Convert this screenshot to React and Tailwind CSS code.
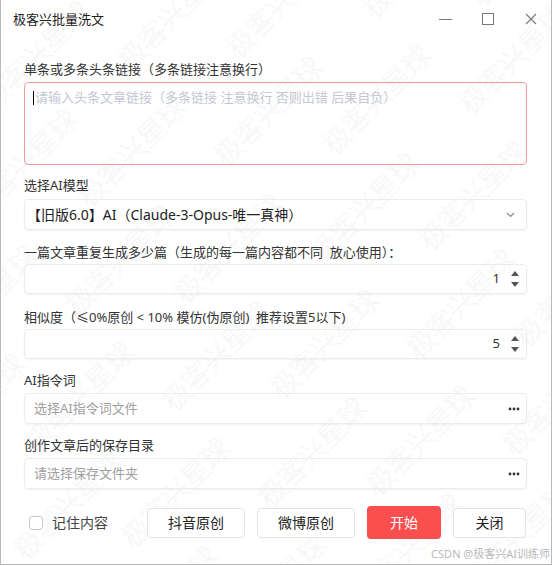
import { useState } from "react";

const font = "font-['Noto_Sans','Noto_Sans_CJK_SC',sans-serif]";

function Label({ children, className }) {
    return (
        <div className={`h-[20px] leading-[20px] text-[13px] text-[#333] whitespace-pre ${className}`}>
            {children}
        </div>
    );
}

function Spinner() {
    return (
        <div className="flex flex-col items-center gap-[6px] w-[10px] mr-[6px]">
            <svg width="8" height="5" viewBox="0 0 8 5">
                <path d="M4 0 L8 5 L0 5 Z" fill="#555" />
            </svg>
            <svg width="8" height="5" viewBox="0 0 8 5">
                <path d="M0 0 L8 0 L4 5 Z" fill="#555" />
            </svg>
        </div>
    );
}

function Dots() {
    return (
        <svg width="12" height="4" viewBox="0 0 12 4" className="mr-[3px]">
            <circle cx="2" cy="2" r="1.4" fill="#333" />
            <circle cx="6" cy="2" r="1.4" fill="#333" />
            <circle cx="10" cy="2" r="1.4" fill="#333" />
        </svg>
    );
}

function Watermark() {
    const rows = Array.from({ length: 14 });
    const cols = Array.from({ length: 9 });
    return (
        <div className="pointer-events-none absolute inset-0 overflow-hidden">
            <div className="absolute left-[-300px] top-[-300px] w-[1200px] h-[1200px] rotate-[-45deg] flex flex-col gap-[38px] pt-[20px]">
                {rows.map((_, r) => (
                    <div
                        key={r}
                        className={`flex gap-[70px] whitespace-nowrap ${r % 2 ? "pl-[95px]" : "pl-[10px]"}`}
                    >
                        {cols.map((_, c) => (
                            <span
                                key={c}
                                className="text-[28px] leading-[30px] font-light text-transparent [-webkit-text-stroke:0.3px_#ececec]"
                            >
                                极客兴星球
                            </span>
                        ))}
                    </div>
                ))}
            </div>
        </div>
    );
}

export default function App() {
    const [remember, setRemember] = useState(false);

    return (
        <div className={`relative w-[553px] h-[566px] bg-white ${font} overflow-hidden`}>
            <div className="relative w-[552px] h-[565px] border border-[#b9b9b9] border-t-0">
                <Watermark />

                {/* title bar */}
                <div className="relative flex items-center h-[38px] pl-[12px]">
                    <span className="text-[13px] text-[#222] leading-none">极客兴批量洗文</span>
                    <div className="ml-auto flex items-center h-full">
                        <div className="w-[13px] h-px bg-[#777] mr-[30px]" />
                        <div className="w-[12px] h-[12px] border border-[#777] mr-[31px]" />
                        <svg width="12" height="12" viewBox="0 0 12 12" className="mr-[14px]">
                            <path d="M1 1 L11 11 M11 1 L1 11" stroke="#777" strokeWidth="1.1" />
                        </svg>
                    </div>
                </div>

                <div className="relative pl-[23px] pr-[24px]">
                    <Label className="mt-[21px]">单条或多条头条链接（多条链接注意换行）</Label>
                    <div className="mt-[3px] h-[83px] rounded-[4px] border border-[#f29b9b] px-[8px] pt-[5px]">
                        <div className="flex items-center h-[20px] text-[13px]">
                            <span className="w-px h-[14px] bg-black mr-[1px]" />
                            <span className="text-[#c4c8d2]">请输入头条文章链接（多条链接 注意换行 否则出错 后果自负）</span>
                        </div>
                    </div>

                    <Label className="mt-[10px]">选择AI模型</Label>
                    <div className="mt-[4px] h-[31px] rounded-[4px] border border-[#ececec] shadow-[0_1px_2px_rgba(0,0,0,0.05)] flex items-center pl-[2px] pr-[11px]">
                        <span className="text-[14px] text-[#222]">【旧版6.0】AI（Claude-3-Opus-唯一真神）</span>
                        <svg width="9" height="6" viewBox="0 0 9 6" className="ml-auto">
                            <path d="M1 1 L4.5 4.5 L8 1" fill="none" stroke="#888" strokeWidth="1.2" />
                        </svg>
                    </div>

                    <Label className="mt-[12px]">{"一篇文章重复生成多少篇（生成的每一篇内容都不同  放心使用）："}</Label>
                    <div className="mt-[2px] h-[30px] rounded-[4px] border border-[#ececec] shadow-[0_1px_2px_rgba(0,0,0,0.05)] flex items-center justify-end">
                        <span className="text-[13px] text-[#333] mr-[10px]">1</span>
                        <Spinner />
                    </div>

                    <Label className="mt-[13px]">{"相似度（≤0%原创 < 10% 模仿(伪原创)  推荐设置5以下)"}</Label>
                    <div className="mt-[2px] h-[30px] rounded-[4px] border border-[#ececec] shadow-[0_1px_2px_rgba(0,0,0,0.05)] flex items-center justify-end">
                        <span className="text-[13px] text-[#333] mr-[10px]">5</span>
                        <Spinner />
                    </div>

                    <Label className="mt-[11px]">AI指令词</Label>
                    <div className="mt-[3px] h-[31px] rounded-[4px] border border-[#ececec] shadow-[0_1px_2px_rgba(0,0,0,0.05)] flex items-center pl-[9px] pr-[3px]">
                        <span className="text-[13px] text-[#a0a0a0]">选择AI指令词文件</span>
                        <span className="ml-auto flex"><Dots /></span>
                    </div>

                    <Label className="mt-[11px]">创作文章后的保存目录</Label>
                    <div className="mt-[3px] h-[31px] rounded-[4px] border border-[#ececec] shadow-[0_1px_2px_rgba(0,0,0,0.05)] flex items-center pl-[9px] pr-[3px]">
                        <span className="text-[13px] text-[#a0a0a0]">请选择保存文件夹</span>
                        <span className="ml-auto flex"><Dots /></span>
                    </div>

                    <div className="mt-[17px] h-[33px] flex items-center">
                        <label className="flex items-center ml-[5px] cursor-pointer">
                            <input
                                type="checkbox"
                                checked={remember}
                                onChange={(e) => setRemember(e.target.checked)}
                                className="appearance-none w-[14px] h-[14px] rounded-[3px] border border-[#c9c9c9] bg-white checked:bg-[#f85454]"
                            />
                            <span className="ml-[9px] text-[14px] text-[#444]">记住内容</span>
                        </label>
                        <div className="ml-auto flex items-center gap-[12px] mr-[1px]">
                            <button className="w-[98px] h-[30px] rounded-[4px] border border-[#e4e4e4] bg-white/90 text-[14px] text-[#222]">
                                抖音原创
                            </button>
                            <button className="w-[98px] h-[30px] rounded-[4px] border border-[#e4e4e4] bg-white/90 text-[14px] text-[#222]">
                                微博原创
                            </button>
                            <button className="w-[74px] h-[33px] rounded-[4px] bg-[#fa4f4f] text-[14px] text-white">
                                开始
                            </button>
                            <button className="w-[73px] h-[30px] rounded-[4px] border border-[#e4e4e4] bg-white/90 text-[14px] text-[#222]">
                                关闭
                            </button>
                        </div>
                    </div>
                </div>

                <div className="pointer-events-none absolute right-[1px] bottom-[3px] text-[11px] leading-[14px] text-[#b9b9b9] bg-white/60">
                    CSDN @极客兴AI训练师
                </div>
            </div>
        </div>
    );
}
